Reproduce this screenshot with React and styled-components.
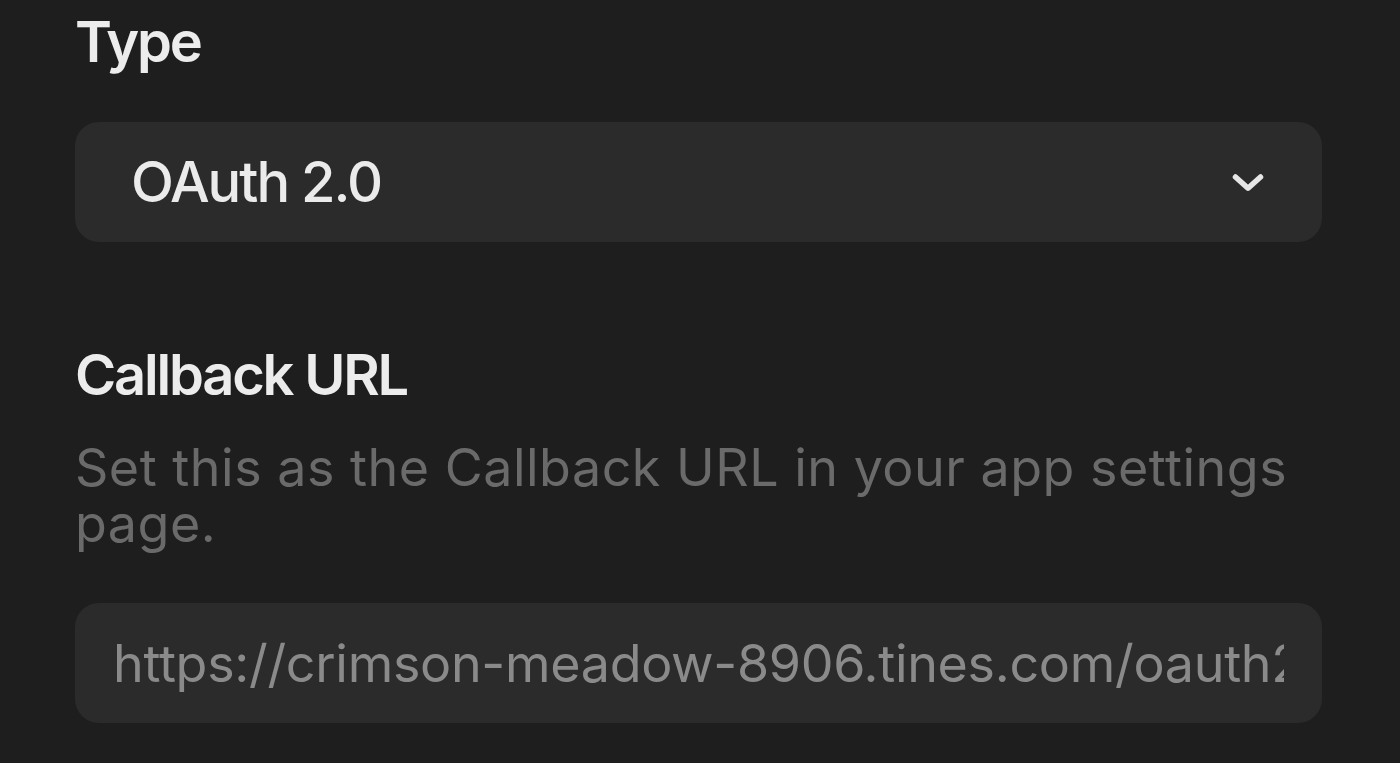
import React from 'react'
import styled, { createGlobalStyle } from 'styled-components'

const GlobalStyle = createGlobalStyle`
  html, body {
    margin: 0;
    padding: 0;
    background: #1e1e1e;
  }
  body {
    font-family: Inter, "Noto Sans", sans-serif;
    -webkit-font-smoothing: antialiased;
  }
`

const Page = styled.div`
  width: 1400px;
  height: 763px;
  overflow: hidden;
  box-sizing: border-box;
  padding: 10px 78px 0 75px;
  background: #1e1e1e;
  display: flex;
  flex-direction: column;
`

const Field = styled.div`
  display: flex;
  flex-direction: column;
  margin-top: ${(p) => p.$top || 0}px;
`

const Label = styled.div`
  font-size: 56px;
  line-height: 64px;
  font-weight: 600;
  letter-spacing: -2.2px;
  color: #ececec;
`

const Hint = styled.div`
  margin-top: 33px;
  font-size: 52px;
  line-height: 56px;
  font-weight: 400;
  letter-spacing: 0.5px;
  color: #6a6a6a;
`

const Box = styled.div`
  margin-top: ${(p) => p.$top}px;
  height: 120px;
  border-radius: 24px;
  background: #2b2b2b;
  display: flex;
  align-items: center;
  box-sizing: border-box;
`

const SelectBox = styled(Box)`
  padding: 0 44px 0 56px;
  justify-content: space-between;
  cursor: pointer;
`

const SelectValue = styled.span`
  font-size: 56px;
  font-weight: 500;
  letter-spacing: -2px;
  color: #ebebeb;
`

const Chevron = styled.svg`
  width: 60px;
  height: 60px;
  flex-shrink: 0;
`

const UrlBox = styled(Box)`
  padding: 0 38px;
`

const UrlInput = styled.input`
  flex: 1;
  min-width: 0;
  border: 0;
  outline: none;
  background: transparent;
  padding: 0;
  font-family: Inter, "Noto Sans", sans-serif;
  font-size: 52px;
  font-weight: 400;
  letter-spacing: -0.3px;
  color: #8a8a8a;
`

export default function App() {
  return (
    <>
      <GlobalStyle />
      <Page>
        <Field>
          <Label>Type</Label>
          <SelectBox $top={48}>
            <SelectValue>OAuth 2.0</SelectValue>
            <Chevron viewBox="0 0 24 24" fill="none" stroke="#e6e6e6" strokeWidth="2.2" strokeLinecap="round" strokeLinejoin="round">
              <path d="m7 10 5 4.5 5-4.5" />
            </Chevron>
          </SelectBox>
        </Field>
        <Field $top={101}>
          <Label>Callback URL</Label>
          <Hint>Set this as the Callback URL in your app settings page.</Hint>
          <UrlBox $top={51}>
            <UrlInput readOnly value="https://crimson-meadow-8906.tines.com/oauth2/callback" />
          </UrlBox>
        </Field>
      </Page>
    </>
  )
}
